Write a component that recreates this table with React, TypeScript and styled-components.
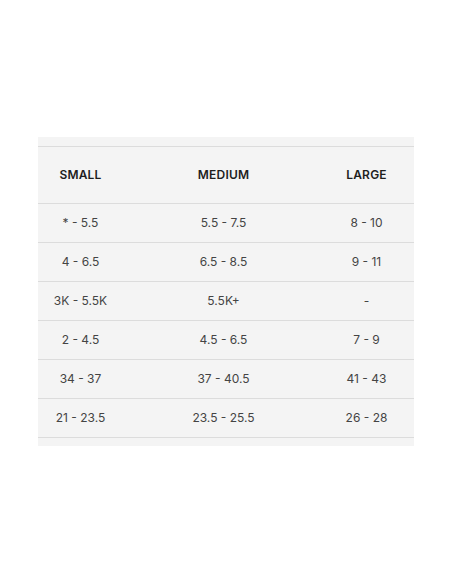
import styled, { createGlobalStyle } from 'styled-components';

const GlobalStyle = createGlobalStyle`
  html, body {
    margin: 0;
    padding: 0;
    background: #ffffff;
  }
  body {
    font-family: 'Inter', 'Liberation Sans', sans-serif;
  }
`;

const sizes = [
  ['* - 5.5', '5.5 - 7.5', '8 - 10'],
  ['4 - 6.5', '6.5 - 8.5', '9 - 11'],
  ['3K - 5.5K', '5.5K+', '-'],
  ['2 - 4.5', '4.5 - 6.5', '7 - 9'],
  ['34 - 37', '37 - 40.5', '41 - 43'],
  ['21 - 23.5', '23.5 - 25.5', '26 - 28'],
];

const App = () => {
  return (
    <>
      <GlobalStyle />
      <Page>
        <ChartPanel>
          <SizeTable>
            <HeaderRow>
              <HeadCell>SMALL</HeadCell>
              <HeadCell>MEDIUM</HeadCell>
              <HeadCell>LARGE</HeadCell>
            </HeaderRow>
            {sizes.map((row, i) => (
              <DataRow key={i}>
                {row.map((value, j) => (
                  <DataCell key={j}>{value}</DataCell>
                ))}
              </DataRow>
            ))}
          </SizeTable>
        </ChartPanel>
      </Page>
    </>
  );
};

const Page = styled.div`
  width: 452px;
  height: 584px;
  padding: 137px 38px 0;
  box-sizing: border-box;
`;

const ChartPanel = styled.div`
  width: 376px;
  background: #f4f4f4;
  padding: 9px 0 8px;
`;

const SizeTable = styled.div`
  border-top: 1px solid #dcdcdc;
`;

const Row = styled.div`
  display: grid;
  grid-template-columns: 85px 201px 85px;
  align-items: center;
  border-bottom: 1px solid #dcdcdc;
`;

const HeaderRow = styled(Row)`
  height: 56px;
`;

const DataRow = styled(Row)`
  height: 38px;
`;

const HeadCell = styled.div`
  text-align: center;
  font-size: 12px;
  font-weight: 600;
  color: #1e1e1e;
  letter-spacing: 0.2px;
  padding-bottom: 2px;
`;

const DataCell = styled.div`
  text-align: center;
  font-size: 12px;
  color: #444444;
  padding-bottom: 2px;
`;

export default App;
